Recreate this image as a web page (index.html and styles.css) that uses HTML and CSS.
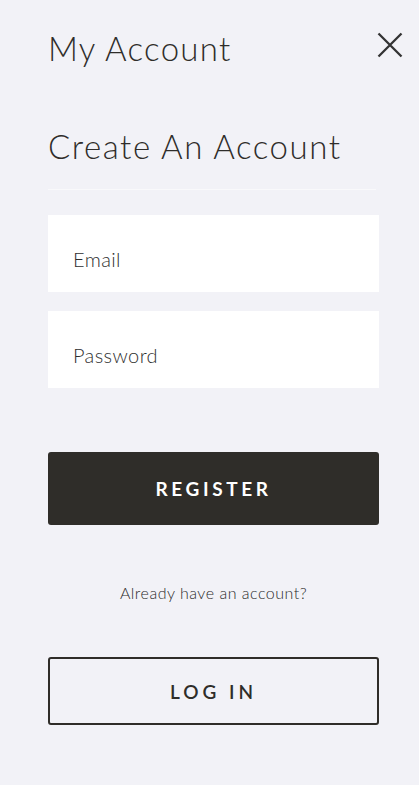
FILE: index.html
```html
<!DOCTYPE html>
<html lang="en">
<head>
<meta charset="utf-8">
<title>My Account</title>
<link rel="stylesheet" href="styles.css">
</head>
<body>
<div class="panel">
  <header class="panel-header">
    <h1 class="panel-title">My Account</h1>
    <button class="close-btn" aria-label="Close">
      <svg width="26" height="26" viewBox="0 0 26 26"><path d="M1.5 1.5 L24.5 24.5 M24.5 1.5 L1.5 24.5" stroke="#333" stroke-width="2.3" fill="none"/></svg>
    </button>
  </header>
  <h2 class="section-title">Create An Account</h2>
  <div class="divider"></div>
  <form class="form">
    <div class="field"><span class="placeholder">Email</span></div>
    <div class="field"><span class="placeholder">Password</span></div>
    <button type="button" class="btn btn-primary">REGISTER</button>
    <p class="hint">Already have an account?</p>
    <button type="button" class="btn btn-outline">LOG IN</button>
  </form>
</div>
</body>
</html>
```

FILE: styles.css
```css
* { box-sizing: border-box; }
html, body { margin: 0; padding: 0; }
body {
  background: #f2f2f7;
  font-family: Lato, "Noto Sans", sans-serif;
  color: #2f2d2a;
}
.panel {
  padding: 0 40px 0 48px;
}
.panel-header {
  display: flex;
  justify-content: space-between;
  align-items: flex-start;
  margin-top: 28px;
}
.panel-title {
  margin: 0;
  font-size: 33px;
  font-weight: 300;
  line-height: 40px;
  letter-spacing: 1.3px;
  color: #2f2d2a;
}
.close-btn {
  background: none;
  border: 0;
  padding: 0;
  margin: 4px -24px 0 0;
  width: 26px;
  height: 26px;
  display: flex;
}
.section-title {
  margin: 58px 0 0 0;
  font-size: 33px;
  font-weight: 300;
  line-height: 40px;
  letter-spacing: 1.55px;
  color: #2f2d2a;
}
.divider {
  height: 1px;
  background: #f9f9fb;
  margin-top: 23px;
  margin-right: 3px;
}
.form {
  display: flex;
  flex-direction: column;
  margin-top: 25px;
}
.field {
  background: #ffffff;
  height: 77px;
  display: flex;
  align-items: center;
  padding: 10px 0 0 25px;
  margin-bottom: 19px;
}
.placeholder {
  font-size: 20px;
  font-weight: 300;
  letter-spacing: 0.4px;
  color: #2e2e2e;
}
.btn {
  height: 73px;
  border-radius: 3px;
  font-family: Lato, "Noto Sans", sans-serif;
  font-size: 19px;
  letter-spacing: 3.6px;
  display: flex;
  align-items: center;
  justify-content: center;
}
.btn-primary {
  margin-top: 45px;
  background: #2f2d29;
  color: #ffffff;
  border: 0;
  font-weight: 700;
}
.hint {
  margin: 58px 0 0 0;
  text-align: center;
  font-size: 16px;
  font-weight: 300;
  letter-spacing: 0.5px;
  color: #2a2a2a;
  line-height: 20px;
}
.btn-outline {
  margin-top: 54px;
  height: 68px;
  background: transparent;
  border: 2px solid #2f2d29;
  color: #2f2d29;
  font-weight: 600;
  letter-spacing: 4px;
}
```
